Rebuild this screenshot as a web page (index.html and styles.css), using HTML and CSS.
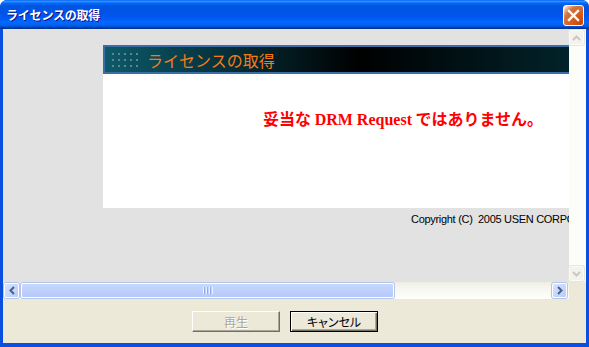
FILE: index.html
```html
<!DOCTYPE html>
<html lang="ja">
<head>
    <meta charset="UTF-8">
    <title>ライセンスの取得</title>
    <link rel="stylesheet" href="styles.css">
</head>
<body>
    <div class="window">
        <div class="titlebar">
            <span class="title">ライセンスの取得</span>
            <div class="close-btn">
                <svg width="13" height="13" viewBox="0 0 13 13">
                    <path d="M2 2 L11 11 M11 2 L2 11" stroke="#fff" stroke-width="2.4" stroke-linecap="square"/>
                </svg>
            </div>
        </div>

        <div class="client">
            <div class="browser">
                <div class="viewport">
                    <div class="page">
                        <div class="sheet">
                            <div class="banner">
                                <div class="dots">
                                    <i></i><i></i><i></i><i></i><i></i>
                                    <i></i><i></i><i></i><i></i><i></i>
                                    <i></i><i></i><i></i><i></i><i></i>
                                </div>
                                <span class="banner-title">ライセンスの取得</span>
                            </div>
                            <div class="message">
                                <p class="error">妥当な <span class="latin">DRM Request</span> ではありません。</p>
                            </div>
                            <div class="copyright">Copyright (C)&nbsp; 2005 USEN CORPORATION</div>
                        </div>
                    </div>
                    <div class="vscroll">
                        <div class="sb-btn disabled">
                            <svg width="9" height="6" viewBox="0 0 9 6"><path d="M1 5 L4.5 1.5 L8 5" fill="none" stroke="#c9c9c0" stroke-width="2"/></svg>
                        </div>
                        <div class="sb-btn disabled">
                            <svg width="9" height="6" viewBox="0 0 9 6"><path d="M1 1 L4.5 4.5 L8 1" fill="none" stroke="#c9c9c0" stroke-width="2"/></svg>
                        </div>
                    </div>
                </div>
                <div class="hscroll-row">
                    <div class="hscroll">
                        <div class="sb-btn">
                            <svg width="6" height="9" viewBox="0 0 6 9"><path d="M5 1 L1.5 4.5 L5 8" fill="none" stroke="#4d6185" stroke-width="2"/></svg>
                        </div>
                        <div class="thumb">
                            <span class="grip"><i></i><i></i><i></i><i></i></span>
                        </div>
                        <div class="track"></div>
                        <div class="sb-btn">
                            <svg width="6" height="9" viewBox="0 0 6 9"><path d="M1 1 L4.5 4.5 L1 8" fill="none" stroke="#4d6185" stroke-width="2"/></svg>
                        </div>
                    </div>
                    <div class="corner"></div>
                </div>
            </div>

            <div class="actions">
                <button class="btn" disabled>再生</button>
                <button class="btn default">キャンセル</button>
            </div>
        </div>
    </div>
</body>
</html>
```

FILE: styles.css
```css
body {
    margin: 0;
    background: #fff;
    font-family: "Noto Sans CJK JP", "Liberation Sans", sans-serif;
}
.window {
    width: 589px;
    height: 347px;
    background: #0a4fe0;
    border-radius: 7px 7px 0 0;
    display: flex;
    flex-direction: column;
    overflow: hidden;
}
.titlebar {
    height: 29px;
    flex: none;
    display: flex;
    align-items: center;
    justify-content: space-between;
    padding: 0 5px 0 6px;
    background: linear-gradient(to bottom, #0058ee 0%, #3a93ff 4%, #288eff 6%, #127dff 8%, #036ffc 10%, #0262ee 14%, #0057e5 20%, #0054e3 24%, #0055eb 56%, #005bf5 66%, #026afe 76%, #0062ef 86%, #0052d6 92%, #0040ab 94%, #003092 100%);
}
.title {
    color: #fff;
    font-size: 12px;
    font-weight: bold;
    letter-spacing: -0.2px;
    text-shadow: 1px 1px #0f1089;
    margin-top: -1px;
}
.close-btn {
    width: 19px;
    height: 19px;
    border: 1px solid #fff;
    border-radius: 3px;
    display: flex;
    align-items: center;
    justify-content: center;
    background: radial-gradient(circle at 90% 90%, #cc4600 0%, #dc6527 55%, #cd7546 70%, #ffccb2 90%, #fff 100%);
    margin-top: 1px;
}
.client {
    flex: 1;
    margin: 0 3px 4px 3px;
    background: #ece9d8;
    display: flex;
    flex-direction: column;
}
.browser {
    height: 270px;
    display: flex;
    flex-direction: column;
}
.viewport {
    height: 253px;
    display: flex;
}
.page {
    flex: 1;
    overflow: hidden;
    background: #e2e2e2;
    padding: 16px 0 0 100px;
}
.sheet {
    width: 640px;
}
.banner {
    height: 25px;
    border: 2px solid #3a6ea8;
    display: flex;
    align-items: center;
    background: linear-gradient(to right, #0d5a6a 0%, #06323c 18%, #000 40%, #01151a 60%, #03404a 100%);
}
.dots {
    display: grid;
    grid-template-columns: repeat(5, 2px);
    gap: 4px;
    margin: 0 9px 0 7px;
}
.dots i {
    width: 2px;
    height: 2px;
    background: #5e8590;
}
.banner-title {
    color: #f47c18;
    font-size: 16px;
    line-height: 20px;
}
.message {
    height: 134px;
    background: #fff;
    padding: 34px 0 0 160px;
    box-sizing: border-box;
}
.error {
    margin: 0;
    color: #f00;
    font-size: 16px;
    line-height: 20px;
    font-weight: bold;
}
.latin {
    font-family: "Liberation Serif", serif;
}
.copyright {
    font-family: "Liberation Sans", Arial, sans-serif;
    font-size: 11px;
    line-height: 13px;
    color: #000;
    margin-top: 5px;
    padding-left: 308px;
    white-space: nowrap;
    letter-spacing: -0.3px;
}
.vscroll {
    width: 17px;
    flex: none;
    background: #fcfcf8;
    display: flex;
    flex-direction: column;
    justify-content: space-between;
    padding: 1px 1px 1px 0;
    box-sizing: border-box;
}
.sb-btn {
    width: 15px;
    height: 15px;
    box-sizing: border-box;
    border: 1px solid #fff;
    border-radius: 2px;
    box-shadow: 0 0 0 1px #b4c5ea;
    background: linear-gradient(to bottom right, #d6e2fe, #b9cdfb);
    display: flex;
    align-items: center;
    justify-content: center;
    flex: none;
}
.sb-btn.disabled {
    background: #f3f2ec;
    box-shadow: 0 0 0 1px #e6e5de;
    border-color: #fbfbf8;
}
.hscroll-row {
    height: 17px;
    display: flex;
}
.hscroll {
    flex: 1;
    display: flex;
    align-items: center;
    padding: 0 2px 0 1px;
    background: linear-gradient(to bottom, #eeede5, #f7f6f1 40%, #fefefb);
}
.thumb {
    width: 373px;
    height: 15px;
    box-sizing: border-box;
    margin-left: 2px;
    border: 1px solid #fff;
    border-radius: 2px;
    box-shadow: 0 0 0 1px #b4c5ea;
    background: linear-gradient(to bottom, #c8d8fc, #bccffb 60%, #b6cafa);
    display: flex;
    align-items: center;
    justify-content: center;
}
.grip {
    display: flex;
    gap: 1px;
}
.grip i {
    width: 1px;
    height: 7px;
    background: #eef3fe;
    border-right: 1px solid #8faaf0;
}
.grip i:last-child {
    border-right: none;
}
.track {
    flex: 1;
}
.corner {
    width: 17px;
    background: #ece9d8;
}
.actions {
    flex: 1;
    display: flex;
    gap: 10px;
    padding: 12px 0 0 189px;
}
.btn {
    width: 88px;
    height: 21px;
    box-sizing: border-box;
    background: #ece9d8;
    border: 1px solid;
    border-color: #fff #716f64 #716f64 #fff;
    box-shadow: inset -1px -1px #aca899;
    font-family: "Noto Sans CJK JP", sans-serif;
    font-size: 12px;
    line-height: 17px;
    padding: 0;
    color: #000;
    font-feature-settings: "palt";
}
.btn:disabled {
    color: #aca899;
    text-shadow: 1px 1px #fff;
}
.btn.default {
    border: 1px solid #000;
    box-shadow: inset 1px 1px #fff, inset -1px -1px #716f64, inset -2px -2px #aca899;
}
```
